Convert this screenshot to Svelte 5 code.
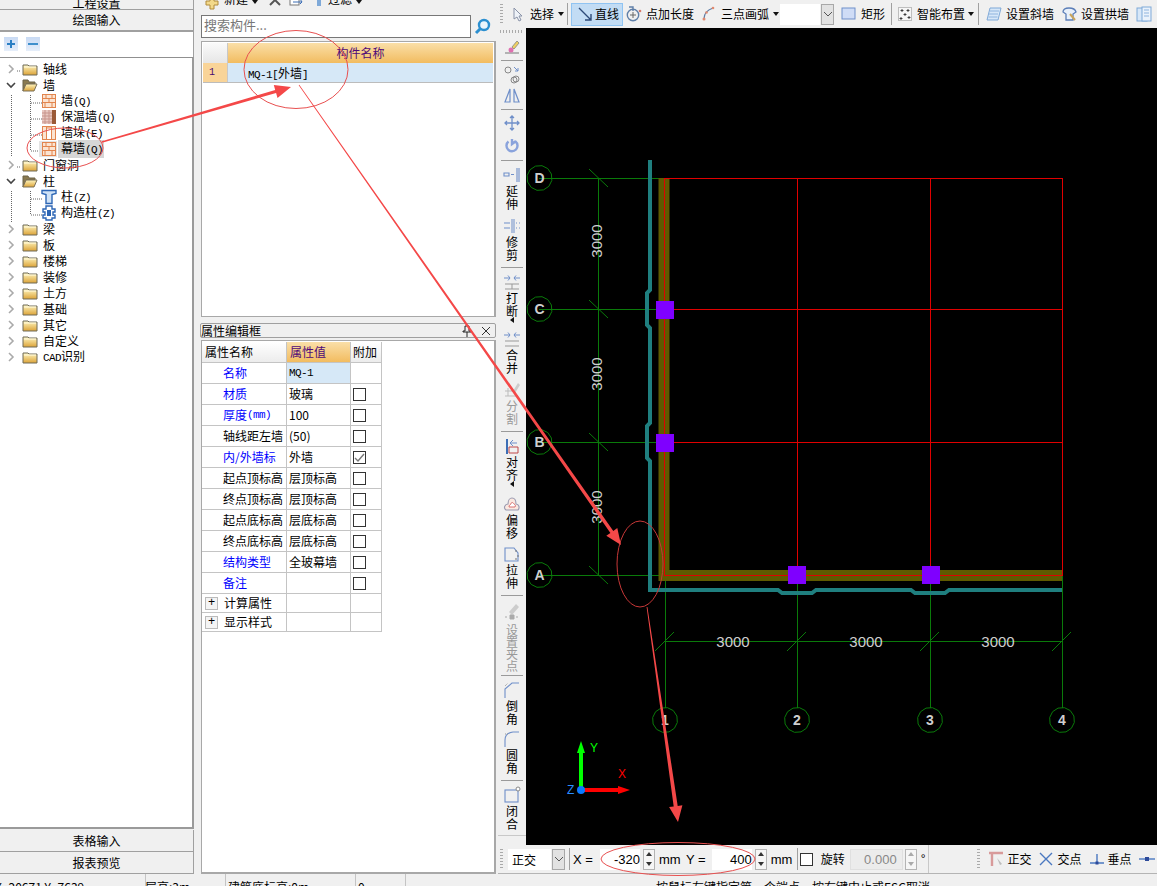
<script>
  const wall = '<rect x="1.5" y="1.5" width="13" height="13" fill="#fbe4d2" stroke="#e2854e"/><path d="M1.5 5.500h13M1.5 9.500h13M5 1.5v4M11 1.5v4M8 5.500v4M4 9.500v5M11 9.500v5" stroke="#e2854e" fill="none"/>';
  const insul = '<rect x="1" y="1" width="10" height="14" fill="#e8c8c0"/><path d="M1 4h10M1 7h10M1 10h10M1 13h10M4 1v14M8 1v14" stroke="#c8958c"/><rect x="11" y="1" width="4" height="14" fill="#9a5a38"/>';
  const pier = '<rect x="1.5" y="1.5" width="13" height="13" fill="#fbe4d2" stroke="#e2854e"/><path d="M5.500 1.5v13M10.500 1.5v13" stroke="#e2854e"/><rect x="5.500" y="3" width="5" height="11.500" fill="#fff" stroke="#e2854e"/>';
  const col = '<path d="M1 1.5h14v3l-4 1v9H5v-9l-4-1z" fill="#cfe2f6" stroke="#2d66b5" stroke-width="1.400"/>';
  const gz = '<path d="M5 1h6v3h3v3h-2v3h2v3h-3v2H5v-2H2v-3h2V7H2V4h3z" fill="#fff" stroke="#2d66b5" stroke-width="1.400"/><rect x="6" y="5" width="4" height="6" fill="#2d66b5"/>';

  const tree = [
    { k: 'closed', t: '轴线' },
    { k: 'open', t: '墙' },
    { k: 'leaf', i: wall, t: '墙', l: '(Q)' },
    { k: 'leaf', i: insul, t: '保温墙', l: '(Q)' },
    { k: 'leaf', i: pier, t: '墙垛', l: '(E)' },
    { k: 'leaf', i: wall, t: '幕墙', l: '(Q)', sel: true },
    { k: 'closed', t: '门窗洞' },
    { k: 'open', t: '柱' },
    { k: 'leaf', i: col, t: '柱', l: '(Z)' },
    { k: 'leaf', i: gz, t: '构造柱', l: '(Z)' },
    { k: 'closed', t: '梁' },
    { k: 'closed', t: '板' },
    { k: 'closed', t: '楼梯' },
    { k: 'closed', t: '装修' },
    { k: 'closed', t: '土方' },
    { k: 'closed', t: '基础' },
    { k: 'closed', t: '其它' },
    { k: 'closed', t: '自定义' },
    { k: 'closed', l0: 'CAD', t: '识别' }
  ];

  const props = [
    { n: '名称', v: 'MQ-1', blue: true, first: true },
    { n: '材质', v: '玻璃', blue: true },
    { n: '厚度', l: '(mm)', v: '100', blue: true },
    { n: '轴线距左墙', v: '(50)' },
    { n: '内/外墙标', v: '外墙', blue: true, on: true },
    { n: '起点顶标高', v: '层顶标高' },
    { n: '终点顶标高', v: '层顶标高' },
    { n: '起点底标高', v: '层底标高' },
    { n: '终点底标高', v: '层底标高' },
    { n: '结构类型', v: '全玻幕墙', blue: true },
    { n: '备注', v: '', blue: true }
  ];

  const b = '#6f8fc9';
  const vtools = [
    { s: '<path d="M4 16h14" stroke="#777"/><path d="M11 10l5-6 2 2-5 6z" fill="#f0d060" stroke="#998"/><circle cx="10" cy="13" r="2.500" fill="#e070b0"/>' },
    { sep: true },
    { s: `<circle cx="7" cy="6" r="3" fill="none" stroke="#888"/><circle cx="15" cy="15" r="3" fill="none" stroke="#888"/><circle cx="13" cy="16" r="3" fill="none" stroke="#888"/><path d="M13 3l4 4M17 4v3h-3" stroke="${b}" fill="none"/>` },
    { s: `<path d="M9 3L4 16h5zM13 3l5 13h-5z" fill="none" stroke="${b}" stroke-width="1.200"/>` },
    { sep: true },
    { s: `<path d="M11 3v14M4 10h14M9 5l2-2 2 2M9 15l2 2 2-2M6 8l-2 2 2 2M16 8l2 2-2 2" fill="none" stroke="${b}" stroke-width="1.300"/>` },
    { s: '<path d="M11 4v5l4-3M7.500 6.500a5.500 5.500 0 1 0 7 0" fill="none" stroke="#8aa3dc" stroke-width="2.400"/>' },
    { sep: true, extra: true },
    { s: `<path d="M3 8h5v3H3zM10 9.500h3M16 3v14M18 3v14" fill="none" stroke="${b}" stroke-width="1.100"/>`, t: '延伸' },
    { s: `<path d="M3 7h6M3 12h6M15 7h1M18 7h1M15 12h1M18 12h1" stroke="${b}" fill="none"/><path d="M11 3v14M13 3v14" stroke="${b}" fill="none"/>`, t: '修剪' },
    { sep: true },
    { s: `<path d="M3 6h6M7 3.500l2 2.500-2 2.500M19 6h-6M15 3.500l-2 2.500 2 2.500" stroke="${b}" fill="none"/><path d="M4 12h14M4 17h14M11 12v5" stroke="#999" fill="none"/>`, t: '打断', drop: true },
    { s: `<path d="M3 6h6M7 3.500l2 2.500-2 2.500M19 6h-6M15 3.500l-2 2.500 2 2.500" stroke="${b}" fill="none"/><path d="M4 12h14M4 17h14" stroke="#999" fill="none"/>`, t: '合并' },
    { s: '<path d="M4 11h8M4 16h13M7 8v8" stroke="#bbb" fill="none"/><path d="M12 11l5-8 2 2-5 8z" fill="#ccc"/>', t: '分割', off: true },
    { sep: true },
    { s: `<path d="M6 3v15" stroke="#3d6eb5" stroke-width="2"/><path d="M8 11h9v6H8z" fill="none" stroke="#c04848"/><path d="M16 7H9M12 4L9 7l3 3" stroke="${b}" fill="none"/>`, t: '对齐', drop: true },
    { s: '<path d="M5 16c-3-2-1-6 2-6 0-4 2-6 4-6s4 2 4 6c3 0 4 4 2 6z" fill="#fbe8e0" stroke="#9a9ab0" stroke-width="1.100"/><path d="M8 13c0-2 1-2 2-3 0-2 2-2 3 0 1 1 2 1 1 3z" fill="#fff" stroke="#d87070"/>', t: '偏移', nudge: true },
    { s: `<path d="M4 4h9l4 5v8H4z" fill="none" stroke="${b}" stroke-width="1.100"/><path d="M15 6v2M17 11v2M15 14v2" stroke="#777"/>`, t: '拉伸' },
    { sep: true },
    { s: '<path d="M8 11l7-8 3 3-7 8z" fill="#ccc"/><path d="M4 16h2M9 14h4v4H9zM15 16h2" stroke="#aaa" fill="#aaa"/>', t: '设置夹点', off: true, four: true },
    { sep: true },
    { s: `<path d="M4 18v-9l7-6h7" fill="none" stroke="${b}" stroke-width="1.100"/><path d="M4 6l3-3" stroke="#999" stroke-dasharray="1 1"/>`, t: '倒角', tight: true },
    { s: `<path d="M4 18v-7Q4 4 12 3h6" fill="none" stroke="${b}" stroke-width="1.100"/><path d="M4 5h3" stroke="#999" stroke-dasharray="1 1"/>`, t: '圆角' },
    { sep: true },
    { s: `<rect x="4" y="5" width="13" height="12" fill="none" stroke="${b}" stroke-width="1.100"/><circle cx="17" cy="4" r="2" fill="#fff" stroke="#888"/>`, t: '闭合' }
  ];

  const tb = {
    pick: '<path d="M4 2v11l3-2 2 4 2-1-2-4h3z" fill="#eef2f8" stroke="#8a93a8"/>',
    line: '<path d="M1 2l12 12M13 8v6H7" fill="none" stroke="#2d4a78" stroke-width="1.400"/>',
    len: '<circle cx="7" cy="9" r="5.700" fill="none" stroke="#5f7fa8" stroke-width="1.400"/><path d="M7 6v6M4 9h6" stroke="#666"/><path d="M3 1h4v4" fill="none" stroke="#5f7fa8" stroke-width="1.400"/><circle cx="14" cy="5" r="1.300" fill="#d87a6a"/>',
    arc: '<path d="M3 13Q3 5 12 2" fill="none" stroke="#5f7fa8" stroke-width="1.300"/><circle cx="3" cy="13" r="1.500" fill="#e08a70"/><circle cx="5.500" cy="6.500" r="1.300" fill="#e08a70"/><circle cx="12" cy="2" r="1.300" fill="#e08a70"/>',
    rect: '<rect x="1" y="2" width="13" height="11" fill="#cfdcf6" stroke="#6f8fc9"/>',
    smart: '<rect x="1.5" y="1.5" width="13" height="13" fill="#f6f6f6" stroke="#888" stroke-dasharray="1 1"/><path d="M5 3v3M3.500 4.500h3M11 3v3M9.500 4.500h3M8 7v3M6.500 8.500h3M4 11v3M2.500 12.500h3M12 10v3M10.500 11.500h3" stroke="#222" stroke-width=".8"/>',
    slant: '<path d="M4 2h11l-3 12H1z" fill="#d7e7f8" stroke="#7fa9d8"/><path d="M4 5h9M3 8h9M2.500 11h9" stroke="#8fb4de"/>',
    arch: '<path d="M2 6q0-4 6-4t7 4l-3 2v6H5V8z" fill="#e8f0fa" stroke="#5b7eb8" stroke-width="1.300"/><path d="M9 8l5 6" stroke="#c9a45a" stroke-width="2"/>',
    more: '<rect x="1" y="2" width="10" height="13" fill="#d7e7f8" stroke="#7fa9d8"/><rect x="6" y="1" width="9" height="14" fill="#eaf2fb" stroke="#7fa9d8"/><path d="M8 4h5M8 7h5M8 10h5" stroke="#8fb4de"/>'
  };

  function ngon(cx, cy, r, n = 12) {
    const pts = [];
    for (let i = 0; i < n; i++) {
      const a = (i / n) * Math.PI * 2 + 0.2;
      pts.push((cx + r * Math.cos(a)).toFixed(1) + ',' + (cy + r * Math.sin(a)).toFixed(1));
    }
    return pts.join(' ');
  }

  // tapered annotation line with an arrow head at the far end
  function arrow(x1, y1, x2, y2, w1, w2, head) {
    const d = Math.hypot(x2 - x1, y2 - y1);
    const ux = (x2 - x1) / d, uy = (y2 - y1) / d;
    const nx = -uy, ny = ux;
    const bx = x2 - ux * head, by = y2 - uy * head;
    const p = [
      [x1 + (nx * w1) / 2, y1 + (ny * w1) / 2],
      [bx + (nx * w2) / 2, by + (ny * w2) / 2],
      [bx + nx * head * 0.42, by + ny * head * 0.42],
      [x2, y2],
      [bx - nx * head * 0.42, by - ny * head * 0.42],
      [bx - (nx * w2) / 2, by - (ny * w2) / 2],
      [x1 - (nx * w1) / 2, y1 - (ny * w1) / 2]
    ];
    return p.map((q) => q[0].toFixed(1) + ',' + q[1].toFixed(1)).join(' ');
  }

  const rowsY = [
    { y: 178, t: 'D' },
    { y: 309, t: 'C' },
    { y: 442, t: 'B' },
    { y: 575, t: 'A' }
  ];
  const colsX = [
    { x: 665, t: '1' },
    { x: 797, t: '2' },
    { x: 930, t: '3' },
    { x: 1062, t: '4' }
  ];
  const wallPath = 'M650 160V290L647 293V325L650 328V423L647 426V458L650 461V590H778L782 593H812L816 590H911L915 593H945L949 590H1062';
  const posts = [[656, 301], [656, 434], [788, 566], [922, 566]];
</script>

<div class="app">
  <aside class="left">
    <div class="nav cut"><span>工程设置</span></div>
    <div class="nav">绘图输入</div>
    <div class="treebar">
      <span class="sq"><svg width="14" height="14" viewBox="0 0 14 14"><path d="M7 3v8M3 7h8" stroke="#2b7fc4" stroke-width="2"/></svg></span>
      <span class="sq"><svg width="14" height="14" viewBox="0 0 14 14"><path d="M2 7h10" stroke="#3f8fcc" stroke-width="2"/></svg></span>
    </div>
    <div class="tree">
      <svg class="guides" width="60" height="170">
        <path d="M11.500 34V96M30.500 34V90M11.500 130V161M30.500 130V154M31 42h11M31 58h11M31 74h11M31 90h11M31 138h11M31 154h11M17 10h4M17 106h4" stroke="#666" stroke-dasharray="1 1" fill="none"/>
      </svg>
      {#each tree as r}
        <div class="trow" class:leaf={r.k === 'leaf'}>
          {#if r.k === 'leaf'}
            <span class="ticon" class:picked={r.sel}><svg width="16" height="16" viewBox="0 0 16 16">{@html r.i}</svg></span>
          {:else}
            <svg class="chev" width="10" height="10" viewBox="0 0 10 10">
              {#if r.k === 'open'}
                <path d="M1 3l4 4 4-4" fill="none" stroke="#444" stroke-width="1.600"/>
              {:else}
                <path d="M3 1l4 4-4 4" fill="none" stroke="#aaa" stroke-width="1.600"/>
              {/if}
            </svg>
            <svg class="folder" width="16" height="14" viewBox="0 0 16 14">
              {#if r.k === 'open'}
                <path d="M1 13V2h5l1 2h6v2H4z" fill="#8a7a50" stroke="#6b6248"/>
                <path d="M1 13l3-7h11l-3 7z" fill="url(#fold)" stroke="#7a7058"/>
              {:else}
                <path d="M1 3h5l1 1h8v9H1z" fill="url(#fold)" stroke="#6e6a58"/>
                <path d="M2 5h12" stroke="#fffbe0"/>
              {/if}
            </svg>
          {/if}
          <span class="tlabel" class:picked={r.sel}>{#if r.l0}<span class="mono">{r.l0}</span>{/if}{r.t}{#if r.l}<span class="mono">{r.l}</span>{/if}</span>
        </div>
      {/each}
    </div>
    <div class="nav under">表格输入</div>
    <div class="nav last">报表预览</div>
  </aside>

  <section class="mid">
    <div class="cuttools">
      <svg width="16" height="20" viewBox="0 0 16 20"><path d="M6 4h4v4h4v4h-4v4H6v-4H2V8h4z" fill="#f3d98a" stroke="#b08a3a"/></svg>
      <span class="tx1">新建</span><i class="caret"></i>
      <svg class="cx" width="14" height="20" viewBox="0 0 14 20"><path d="M2 2l10 10M12 2L2 12" stroke="#555" stroke-width="2"/></svg>
      <svg class="cp" width="16" height="20" viewBox="0 0 16 20"><rect x="2" y="2" width="9" height="10" fill="#fff" stroke="#777"/><path d="M5 9h9M12 6l2 3-2 2" stroke="#3d6eb5" fill="none"/></svg>
      <svg class="fl" width="10" height="20" viewBox="0 0 10 20"><path d="M3 0h4v13H3z" fill="#7fa9d8"/></svg>
      <span class="tx1">过滤</span><i class="caret"></i>
    </div>
    <div class="search">
      <div class="sinput">搜索构件...</div>
      <svg class="lens" width="20" height="20" viewBox="0 0 20 20"><circle cx="11" cy="8" r="5" fill="#eaf5fc" stroke="#2b8fd0" stroke-width="2.400"/><path d="M7 12l-4 4" stroke="#2b8fd0" stroke-width="3"/></svg>
    </div>
    <div class="list">
      <div class="lrow head"><span class="num"></span><span class="lname orange">构件名称</span></div>
      <div class="lrow"><span class="num one">1</span><span class="lval"><span class="mono">MQ-1[</span>外墙<span class="mono">]</span></span></div>
    </div>
    <div class="ptitle"><span>属性编辑框</span>
      <svg width="10" height="12" viewBox="0 0 10 12"><path d="M3 1h4v5h2v1H1V6h2zM5 7v5" fill="none" stroke="#222"/></svg>
      <svg width="10" height="10" viewBox="0 0 10 10"><path d="M1 1l8 8M9 1L1 9" stroke="#333"/></svg>
    </div>
    <div class="ppanel">
      <div class="ptable">
        <div class="c hd">属性名称</div>
        <div class="c hd orange">属性值</div>
        <div class="c hd">附加</div>
        {#each props as p}
          <div class="c name" class:blue={p.blue}>{p.n}{#if p.l}<span class="mono">{p.l}</span>{/if}</div>
          <div class="c val" class:cur={p.first} class:mono={p.first}>{p.v}</div>
          <div class="c chk">
            {#if !p.first}
              <span class="box">{#if p.on}<svg width="13" height="13" viewBox="0 0 13 13"><path d="M2 7l3 3 6-7" fill="none" stroke="#777" stroke-width="1.400"/></svg>{/if}</span>
            {/if}
          </div>
        {/each}
        <div class="c name grp"><span class="plus">+</span>计算属性</div><div class="c grp"></div><div class="c grp"></div>
        <div class="c name grp"><span class="plus">+</span>显示样式</div><div class="c grp"></div><div class="c grp"></div>
      </div>
    </div>
  </section>

  <section class="work">
    <div class="topbar">
      <i class="grip"></i>
      <span class="tool"><svg width="16" height="16" viewBox="0 0 16 16">{@html tb.pick}</svg></span>
      <span class="tx">选择</span><i class="caret dark"></i><i class="vsep s0"></i>
      <span class="tool on"><svg width="16" height="16" viewBox="0 0 16 16">{@html tb.line}</svg>直线</span>
      <span class="tool n4"><svg width="16" height="16" viewBox="0 0 16 16">{@html tb.len}</svg>点加长度</span>
      <span class="tool"><svg width="16" height="16" viewBox="0 0 16 16">{@html tb.arc}</svg>三点画弧</span>
      <i class="caret dark c1"></i>
      <span class="blank"></span><span class="ddbtn"><svg width="10" height="10" viewBox="0 0 10 10"><path d="M1 3l4 4 4-4" fill="none" stroke="#555"/></svg></span>
      <span class="tool"><svg width="16" height="16" viewBox="0 0 16 16">{@html tb.rect}</svg>矩形</span>
      <i class="vsep s1"></i>
      <span class="tool n2"><svg width="16" height="16" viewBox="0 0 16 16">{@html tb.smart}</svg>智能布置</span>
      <i class="caret dark c2"></i><i class="vsep s2"></i>
      <span class="tool"><svg width="16" height="16" viewBox="0 0 16 16">{@html tb.slant}</svg>设置斜墙</span>
      <span class="tool"><svg width="16" height="16" viewBox="0 0 16 16">{@html tb.arch}</svg>设置拱墙</span>
      <span class="tool"><svg width="16" height="16" viewBox="0 0 16 16">{@html tb.more}</svg></span>
    </div>
    <div class="body">
      <div class="vbar">
        <i class="hgrip"></i>
        {#each vtools as v}
          {#if v.sep}
            <i class="hsep" class:extra={v.extra}></i>
          {:else if v.t}
            <div class="vt lab" class:off={v.off} class:tightb={v.tight} class:nudge={v.nudge} class:four={v.four}>
              <svg width="22" height="20" viewBox="0 0 22 20">{@html v.s}</svg>
              <span class="stack">{v.t}</span>
              {#if v.drop}<i class="ldrop"></i>{/if}
            </div>
          {:else}
            <div class="vt"><svg width="22" height="20" viewBox="0 0 22 20">{@html v.s}</svg></div>
          {/if}
        {/each}
      </div>
      <svg class="cad" viewBox="526 28 631 817" width="631" height="817">
        <rect x="526" y="28" width="631" height="817" fill="#000"/>
        <!-- axes -->
        <g stroke="#0a7a0a" fill="none" shape-rendering="crispEdges">
          <path d="M539 178.500H664M539 309.500H656M539 442.500H656M539 575.500H659"/>
          <path d="M598.500 178V575M665.500 581V708M797.500 584V708M930.500 584V708M1062.500 575V708"/>
          <path d="M665 641.500H1062"/>
        </g>
        <g stroke="#0a7a0a" fill="none">
          {#each rowsY as r}
            <path d="M{589} {r.y - 9}L{608} {r.y + 9}"/>
            <polygon points={ngon(539.500, r.y, 12.500)}/>
          {/each}
          {#each colsX as c}
            <path d="M{c.x - 10} {651}L{c.x + 9} {632}"/>
            <polygon points={ngon(c.x, 720, 12.500)}/>
          {/each}
        </g>
        <!-- walls -->
        <path d="M664 178V575.500H1062" stroke="#5f5a00" stroke-width="11" fill="none"/>
        <path d={wallPath} stroke="#1f7f7f" stroke-width="4" fill="none"/>
        <g stroke="#e00000" fill="none" shape-rendering="crispEdges">
          <path d="M664 178.500H1062V575.500H664V178M664 309.500H1062M664 442.500H1062M797.500 178V575M930.500 178V575"/>
        </g>
        {#each posts as p}
          <rect x={p[0]} y={p[1]} width="18" height="18" fill="#7f00ff"/>
        {/each}
        <!-- labels -->
        <g class="cadtx">
          {#each rowsY as r}
            <text class="axis" x="539.500" y={r.y + 5} text-anchor="middle">{r.t}</text>
          {/each}
          {#each colsX as c}
            <text class="axis" x={c.x} y="725" text-anchor="middle">{c.t}</text>
          {/each}
          <text x="733" y="646.500" text-anchor="middle">3000</text>
          <text x="866" y="646.500" text-anchor="middle">3000</text>
          <text x="998" y="646.500" text-anchor="middle">3000</text>
          <text transform="translate(602 241) rotate(-90)" text-anchor="middle">3000</text>
          <text transform="translate(602 374) rotate(-90)" text-anchor="middle">3000</text>
          <text transform="translate(602 507) rotate(-90)" text-anchor="middle">3000</text>
        </g>
        <!-- ucs -->
        <path d="M581 790V750" stroke="#00ff00" stroke-width="4"/>
        <path d="M581 741l-4 12h8z" fill="#00ff00"/>
        <path d="M581 790H620" stroke="#ff0000" stroke-width="4"/>
        <path d="M630 790l-12-4v8z" fill="#ff0000"/>
        <circle cx="581" cy="790" r="4" fill="#0a7aff"/>
        <text x="590" y="752" class="ucs" fill="#00ff00">Y</text>
        <text x="618" y="778" class="ucs" fill="#ff0000">X</text>
        <text x="567" y="794" class="ucs" fill="#2a8cff">Z</text>
      </svg>
    </div>
    <div class="botbar">
      <i class="grip"></i>
      <span class="combo">正交</span><span class="ddbtn small"><svg width="10" height="10" viewBox="0 0 10 10"><path d="M1 3l4 4 4-4" fill="none" stroke="#555"/></svg></span>
      <i class="vsep bs"></i>
      <span class="lt xl">X =</span>
      <span class="num1 x1">-320</span><span class="spin"><i class="up"></i><i class="dn"></i></span>
      <span class="lt mm">mm</span><span class="lt yl">Y =</span>
      <span class="num1 y1">400</span><span class="spin"><i class="up"></i><i class="dn"></i></span>
      <span class="lt mm">mm</span>
      <i class="vsep bs2"></i>
      <span class="box big"></span>
      <span class="rot">旋转</span>
      <span class="num1 off">0.000</span><span class="spin faded"><i class="up"></i><i class="dn"></i></span>
      <span class="deg">°</span>
      <div class="barfill"></div>
      <i class="grip g2"></i>
      <span class="tool snap first"><svg width="16" height="16" viewBox="0 0 16 16"><path d="M1 2h14M4 2v13" stroke="#d89a9a" stroke-width="2.400" fill="none"/><path d="M9 7l5 6-2 1z" fill="#bbb"/></svg>正交</span>
      <span class="tool snap"><svg width="16" height="16" viewBox="0 0 16 16"><path d="M2 2l12 12M14 2L2 14" stroke="#4a78c0" stroke-width="1.400"/></svg>交点</span>
      <span class="tool snap"><svg width="16" height="16" viewBox="0 0 16 16"><path d="M1 12h14M8 3v9" stroke="#4a78c0" stroke-width="1.400"/><rect x="6.500" y="10.500" width="3" height="3" fill="#2d4a9a"/></svg>垂点</span>
      <span class="tool snap"><svg width="16" height="16" viewBox="0 0 16 16"><path d="M0 8h16" stroke="#4a78c0" stroke-width="1.400"/><rect x="6" y="6" width="4" height="4" fill="#2d4a9a"/></svg></span>
    </div>
  </section>

  <footer class="status">
    <span class="st s1">X=20671 Y=7639</span>
    <span class="st s2">层高:3m</span>
    <span class="st s3">建筑底标高:0m</span>
    <span class="st s4">0</span>
    <span class="st s5">按鼠标左键指定第一个端点，按右键中止或ESC取消</span>
  </footer>

  <!-- red markup drawn on top of the screenshot -->
  <svg class="markup" width="1157" height="886" viewBox="0 0 1157 886">
    <defs>
      <linearGradient id="fold" x1="0" y1="0" x2="0" y2="1">
        <stop offset="0" stop-color="#fff6c0"/>
        <stop offset="1" stop-color="#dca338"/>
      </linearGradient>
    </defs>
    <g fill="none" stroke="#e85050">
      <ellipse cx="65" cy="148" rx="38" ry="20"/>
      <ellipse cx="296" cy="69.500" rx="52" ry="39"/>
      <ellipse cx="640" cy="564" rx="23" ry="43" stroke="#c83838"/>
      <ellipse cx="678" cy="859" rx="77" ry="16.500"/>
    </g>
    <g fill="#f44848">
      <polygon points={arrow(102, 142, 291, 87, 1.500, 3, 16)}/>
      <polygon points={arrow(299, 85, 621, 545, .8, 3.500, 16)}/>
      <polygon points={arrow(647, 607, 678, 822, .8, 4, 16)}/>
    </g>
  </svg>
</div>

<style>
  :global(body) {
    margin: 0;
    background: #f0f0f0;
    overflow: hidden;
  }
  .app {
    position: relative;
    width: 1157px;
    height: 886px;
    overflow: hidden;
    display: grid;
    grid-template-columns: 195px 303px 659px;
    grid-template-rows: 874px 12px;
    background: #f0f0f0;
    color: #000;
    font: 12px/14px "Noto Sans CJK SC", "Liberation Sans", sans-serif;
  }
  i { display: block; font-style: normal; }
  .mono { font-family: "Liberation Mono", monospace; font-size: 11px; letter-spacing: -0.6px; }

  /* left navigator */
  .left { display: flex; flex-direction: column; height: 874px; }
  .nav {
    height: 21px;
    width: 194px;
    flex: none;
    box-sizing: border-box;
    border-bottom: 1px solid #a0a0a0;
    border-right: 1px solid #a0a0a0;
    display: flex;
    align-items: center;
    justify-content: center;
    background: #f0f0f0;
  }
  .nav.cut { height: 10px; align-items: flex-end; overflow: hidden; }
  .nav.cut span { display: block; flex: none; margin-bottom: -1px; }
  .nav.under { margin-top: 1px; height: 22px; }
  .nav.last { height: 22px; }
  .treebar {
    height: 27px;
    width: 194px;
    flex: none;
    box-sizing: border-box;
    background: #fff;
    border-top: 1px solid #a0a0a0;
    border-right: 1px solid #a0a0a0;
    border-bottom: 1px solid #909090;
    padding: 5px 4px;
    display: flex;
    gap: 8px;
  }
  .sq {
    width: 14px;
    height: 14px;
    background: linear-gradient(#c8daf4, #e6eefa);
    display: block;
  }
  .tree {
    position: relative;
    width: 194px;
    height: 771px;
    flex: none;
    box-sizing: border-box;
    background: #fff;
    border-right: 2px solid #9a9a9a;
    border-bottom: 2px solid #9a9a9a;
    padding-top: 3px;
  }
  .guides { position: absolute; left: 0; top: 3px; }
  .trow {
    position: relative;
    height: 16px;
    display: flex;
    align-items: center;
    padding-left: 6px;
  }
  .trow.leaf { padding-left: 41px; }
  .chev { margin-right: 6px; flex: none; }
  .folder { margin-right: 5px; flex: none; }
  .ticon { width: 16px; height: 16px; display: block; margin-right: 4px; flex: none; }
  .ticon.picked { background: #e4e4e4; box-shadow: -2px 0 0 #e4e4e4; }
  .tlabel { padding-right: 1px; white-space: nowrap; }
  .tlabel.picked { background: #d6d6d6; margin-left: -3px; padding-left: 3px; line-height: 16px; }

  /* middle column */
  .mid { padding-left: 6px; width: 295px; height: 874px; display: flex; flex-direction: column; }
  .cuttools { height: 13px; overflow: hidden; display: flex; align-items: flex-end; flex: none; padding-left: 3px; }
  .cuttools svg { flex: none; }
  .tx1 { display: block; height: 20px; line-height: 12px; flex: none; margin-left: 4px; }
  .caret {
    width: 0; height: 0;
    border: 3px solid transparent;
    border-top: 4px solid #111;
    border-bottom: 0;
    margin: 0 0 9px 4px;
    flex: none;
  }
  .cx { margin-left: 10px; }
  .cp { margin-left: 6px; }
  .fl { margin-left: 10px; }
  .search { margin-top: 2px; height: 23px; display: flex; align-items: center; flex: none; }
  .sinput {
    width: 270px;
    height: 23px;
    box-sizing: border-box;
    background: #fff;
    border: 1px solid #777;
    padding-left: 2px;
    color: #777;
    font-size: 13px;
    line-height: 18px;
  }
  .lens { margin-left: 2px; }
  .list {
    margin-top: 3px;
    height: 276px;
    flex: none;
    box-sizing: border-box;
    background: #fff;
    border: 1px solid #a8a8a8;
    border-right-width: 2px;
    padding: 1px 1px 0 1px;
  }
  .lrow { display: flex; height: 19px; border-bottom: 1px solid #bcbcbc; }
  .lrow.head { height: 20px; border: 0; }
  .num {
    width: 25px;
    flex: none;
    box-sizing: border-box;
    background: linear-gradient(#fafafa, #e6e6e6);
    border-right: 1px solid #c8c8c8;
  }
  .num.one {
    background: #f9d498;
    color: #4a0a70;
    text-align: center;
    line-height: 19px;
    font-family: "Liberation Mono", monospace;
    font-size: 10px;
    padding-right: 6px;
  }
  .lname { flex: 1; text-align: center; line-height: 20px; }
  .orange { background: linear-gradient(#fadfa8, #f2bc60); color: #4f0a78; }
  .lval { flex: 1; background: #d6e8f7; line-height: 19px; padding-left: 20px; }
  .ptitle {
    margin-top: 6px;
    height: 15px;
    box-sizing: border-box;
    flex: none;
    margin-left: -1px;
    border: 1px solid #a0a0a0;
    border-radius: 2px;
    display: flex;
    align-items: center;
    gap: 9px;
    padding-right: 4px;
    background: #f0f0f0;
    line-height: 13px;
  }
  .ptitle span { flex: 1; }
  .ppanel {
    margin-top: 2px;
    flex: 1;
    box-sizing: border-box;
    background: #fff;
    border: 1px solid #a8a8a8;
    border-right-width: 2px;
    border-bottom-width: 2px;
    padding-top: 1px;
  }
  .ptable {
    display: grid;
    width: 180px;
    grid-template-columns: 85px 64px 31px;
    grid-template-rows: 21px repeat(11, 21px) 19px 19px;
  }
  .c {
    box-sizing: border-box;
    border-right: 1px solid #c4c4c4;
    border-bottom: 1px solid #c4c4c4;
    display: flex;
    align-items: center;
    white-space: nowrap;
  }
  .hd { background: linear-gradient(#fff, #ececec); padding-left: 3px; }
  .hd.orange { background: linear-gradient(#fadfa8, #f2bc60); }
  .hd:nth-child(3) { padding-left: 2px; }
  .name { padding-left: 21px; }
  .name.blue { color: #0000ff; }
  .val { padding-left: 2px; }
  .cur { background: #d6e8f7; }
  .chk { padding-left: 2px; }
  .box {
    width: 13px;
    height: 13px;
    display: block;
    box-sizing: border-box;
    border: 1px solid #333;
    background: #fff;
    line-height: 0;
  }
  .box svg { margin: -1px; }
  .grp.name { padding-left: 3px; }
  .plus {
    width: 11px;
    height: 11px;
    flex: none;
    border: 1px solid #bbb;
    background: #f4f4f4;
    font: 12px/11px "Liberation Mono", monospace;
    text-align: center;
    margin-right: 6px;
  }

  /* work area */
  .work { height: 874px; width: 659px; display: flex; flex-direction: column; }
  .topbar {
    height: 28px;
    flex: none;
    box-sizing: border-box;
    display: flex;
    align-items: center;
    padding-left: 2px;
    gap: 7px;
    overflow: hidden;
  }
  .grip { width: 3px; height: 20px; flex: none; background: repeating-linear-gradient(#aaa 0 1px, transparent 1px 3px); }
  .tool { display: flex; align-items: center; gap: 4px; white-space: nowrap; flex: none; }
  .tx { margin-left: -3px; white-space: nowrap; flex: none; }
  .tool.on {
    margin-left: -4px;
    width: 52px;
    height: 23px;
    box-sizing: border-box;
    background: #c2dcf4;
    border: 1px solid #90c4f2;
    padding-left: 6px;
    gap: 1px;
  }
  .tool.n4 { margin-left: -4px; }
  .tool.n2 { margin-left: -2px; }
  .topbar .caret { margin: 0 0 0 -3px; }
  .topbar .caret.c1 { margin-left: -3px; }
  .topbar .caret.c2 { margin-left: -4px; }
  .vsep { width: 1px; height: 22px; background: #a0a0a0; flex: none; }
  .s0 { margin-left: -4px; }
  .s1 { margin-left: -1px; }
  .s2 { margin-left: -3px; }
  .blank { width: 40px; height: 21px; background: #fff; flex: none; margin-left: -6px; }
  .ddbtn {
    width: 13px;
    height: 21px;
    flex: none;
    box-sizing: border-box;
    margin-left: -6px;
    background: #e2e2e2;
    border: 1px solid #a8a8a8;
    display: flex;
    align-items: center;
    justify-content: center;
  }
  .body { flex: 1; display: flex; min-height: 0; }
  .vbar { width: 28px; flex: none; box-sizing: border-box; border-bottom: 1px solid #c8c8c8; height: 808px; }
  .hgrip { height: 3px; margin: 2px 2px 3px; background: repeating-linear-gradient(90deg, #aaa 0 1px, transparent 1px 3px); }
  .hsep { height: 1px; margin: 2px 3px; background: #9a9a9a; }
  .hsep.extra { margin-top: 4px; }
  .vt { height: 22px; display: flex; justify-content: center; align-items: center; }
  .vt.lab { height: auto; flex-direction: column; padding: 2px 0 4px; }
  .vt.tightb { padding-bottom: 2px; }
  .vt.nudge { padding-top: 3px; padding-bottom: 3px; }
  .vt.four { padding-top: 3px; padding-bottom: 1px; }
  .four .stack { padding-top: 3px; line-height: 12px; }
  .stack { width: 12px; line-height: 12.500px; display: block; word-break: break-all; text-align: center; }
  .off .stack { color: #999; }
  .ldrop { width: 0; height: 0; border: 3px solid transparent; border-right: 4px solid #111; border-left: 0; }
  .cad { display: block; flex: none; margin-top: 0; }
  .cadtx text { fill: #cfcfcf; font: 15px "Liberation Sans", sans-serif; }
  .cadtx text.axis { font-size: 14px; font-weight: 700; }
  .ucs { font: 12px "Liberation Sans", sans-serif; }

  .botbar {
    height: 29px;
    flex: none;
    box-sizing: border-box;
    display: flex;
    align-items: center;
    padding-left: 2px;
    border-bottom: 1px solid #b4b4b4;
    margin-top: -1px;
    position: relative;
  }
  .combo {
    margin-left: 5px;
    width: 43px;
    height: 21px;
    box-sizing: border-box;
    padding-left: 4px;
    background: #fff;
    line-height: 21px;
    flex: none;
  }
  .ddbtn.small { margin-left: 1px; }
  .bs { margin-left: 4px; }
  .lt { font: 13px "Liberation Sans", sans-serif; flex: none; white-space: nowrap; }
  .xl { margin-left: 3px; width: 27px; }
  .num1 {
    width: 40px;
    height: 21px;
    box-sizing: border-box;
    background: #fff;
    text-align: right;
    padding-right: 0;
    font: 13px/21px "Liberation Sans", sans-serif;
    flex: none;
  }
  .y1 { margin-left: 6px; }
  .spin { width: 12px; height: 21px; margin: 0 4px 0 3px; flex: none; box-sizing: border-box; border: 1px solid #b4b4b4; background: #f6f6f6; display: flex; flex-direction: column; align-items: center; justify-content: space-around; }
  .up { width: 0; height: 0; border: 3px solid transparent; border-bottom: 4px solid #333; border-top: 0; }
  .dn { width: 0; height: 0; border: 3px solid transparent; border-top: 4px solid #333; border-bottom: 0; }
  .mm { width: 22px; }
  .yl { margin-left: 5px; }
  .bs2 { margin-left: 4px; }
  .box.big { margin-left: 2px; flex: none; }
  .rot { margin-left: 8px; flex: none; }
  .num1.off { margin-left: 5px; width: 53px; background: #ececec; color: #888; padding-right: 5px; border: 1px solid #e0e0e0; line-height: 19px; }
  .spin.faded { margin-left: 2px; }
  .spin.faded .up { border-bottom-color: #aaa; }
  .spin.faded .dn { border-top-color: #aaa; }
  .deg { margin-left: 0; font: 12px "Liberation Sans", sans-serif; flex: none; }
  .barfill { width: 49px; height: 28px; margin-left: 3px; flex: none; border-left: 1px solid #c8c8c8; box-sizing: border-box; }
  .grip.g2 { margin-left: 0; }
  .snap { margin-left: 7px; gap: 3px; }
  .snap.first { margin-left: 8px; }

  .status {
    grid-column: 1 / -1;
    height: 12px;
    display: grid;
    grid-template-columns: 146px 80px 130px 50px 1fr;
    overflow: hidden;
  }
  .st {
    height: 12px;
    padding: 6px 0 0 2px;
    box-sizing: content-box;
    border-right: 1px solid #c4c4c4;
    line-height: 14px;
    white-space: nowrap;
    overflow: hidden;
  }
  .st.s1 { text-indent: -6px; }
  .st.s5 { border: 0; padding-left: 250px; }

  .markup { position: absolute; left: 0; top: 0; pointer-events: none; }
</style>
